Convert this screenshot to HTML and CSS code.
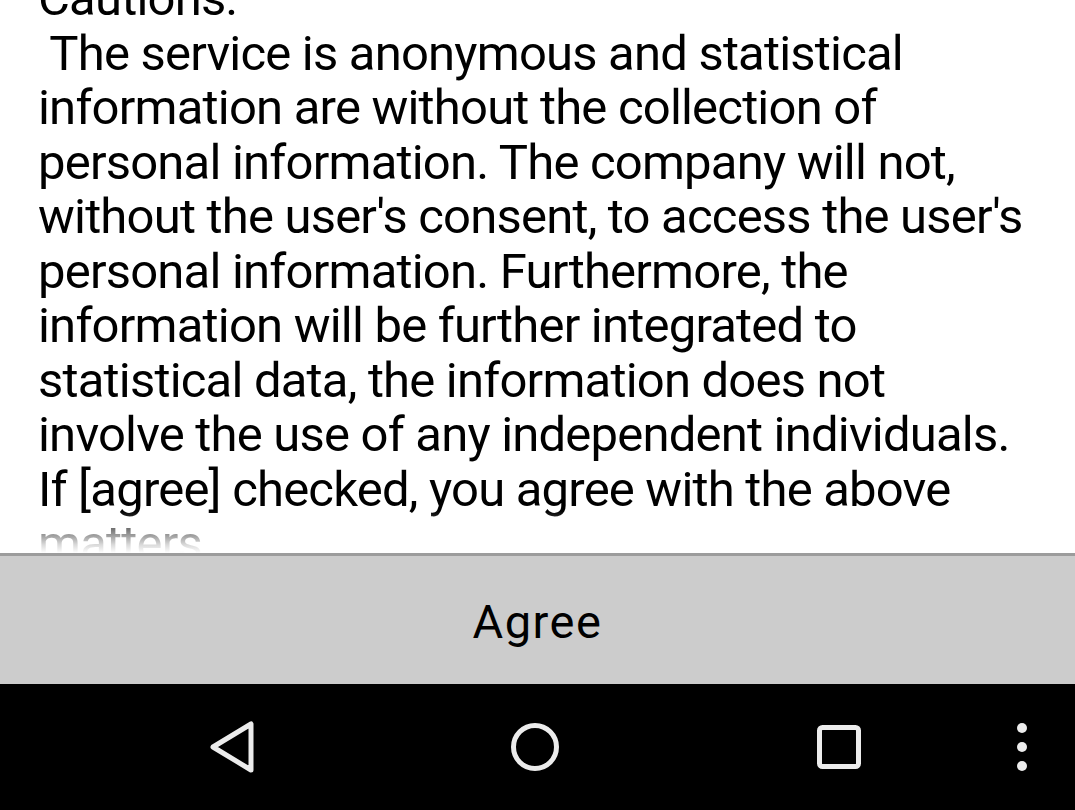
FILE: index.html
```html
<!DOCTYPE html>
<html>
<head>
<meta charset="utf-8">
<link rel="stylesheet" href="styles.css">
</head>
<body>
<div class="screen">
  <div class="content">
    <p class="terms">Cautions:
 The service is anonymous and statistical information are without the collection of personal information. The company will not, without the user's consent, to access the user's personal information. Furthermore, the information will be further integrated to statistical data, the information does not involve the use of any independent individuals. If [agree] checked, you agree with the above matters.</p>
  </div>
  <div class="actions">
    <button class="agree">Agree</button>
  </div>
  <nav class="navbar">
    <span class="nav-item">
      <svg width="56" height="60" viewBox="0 0 56 60"><polygon points="10,30 48,7 48,53" fill="none" stroke="#ececec" stroke-width="5" stroke-linejoin="round"/></svg>
    </span>
    <span class="nav-item">
      <svg width="56" height="56" viewBox="0 0 56 56"><circle cx="28" cy="28" r="21.5" fill="none" stroke="#ececec" stroke-width="5"/></svg>
    </span>
    <span class="nav-item">
      <svg width="50" height="50" viewBox="0 0 50 50"><rect x="5.5" y="5.5" width="39" height="39" rx="3" fill="none" stroke="#ececec" stroke-width="5"/></svg>
    </span>
    <span class="nav-item menu">
      <svg width="14" height="52" viewBox="0 0 14 52"><circle cx="7" cy="7" r="5" fill="#ececec"/><circle cx="7" cy="26" r="5" fill="#ececec"/><circle cx="7" cy="45" r="5" fill="#ececec"/></svg>
    </span>
  </nav>
</div>
</body>
</html>
```

FILE: styles.css
```css
html, body {
  margin: 0;
  padding: 0;
  background: #ffffff;
}

.screen {
  width: 1075px;
  height: 810px;
  display: flex;
  flex-direction: column;
  font-family: Roboto, "Noto Sans", sans-serif;
}

.content {
  position: relative;
  height: 553px;
  overflow: hidden;
  background: #ffffff;
}

.content::after {
  content: "";
  position: absolute;
  left: 0;
  right: 0;
  bottom: 0;
  height: 42px;
  background: linear-gradient(to bottom, rgba(255,255,255,0), rgba(255,255,255,0.85) 80%, #ffffff);
}

.terms {
  margin: -28px 0 0 0;
  padding: 0 37px 0 38px;
  font-size: 49px;
  letter-spacing: -0.8px;
  line-height: 54.5px;
  color: #000000;
  white-space: pre-wrap;
}

.actions {
  height: 131px;
  border-top: 3px solid #9c9c9c;
  box-sizing: border-box;
  background: #cccccc;
  display: flex;
}

.agree {
  flex: 1;
  border: none;
  background: transparent;
  font-family: Roboto, "Noto Sans", sans-serif;
  font-size: 47px;
  letter-spacing: 1.5px;
  color: #000000;
  padding: 3px 0 0 0;
}

.navbar {
  flex: 1;
  background: #000000;
  display: grid;
  grid-template-columns: 79px repeat(3, 304px) 62px;
  align-items: center;
}

.nav-item {
  display: flex;
  justify-content: center;
  align-items: center;
}

.nav-item:first-child {
  grid-column: 2;
}

.nav-item svg {
  display: block;
}
```
